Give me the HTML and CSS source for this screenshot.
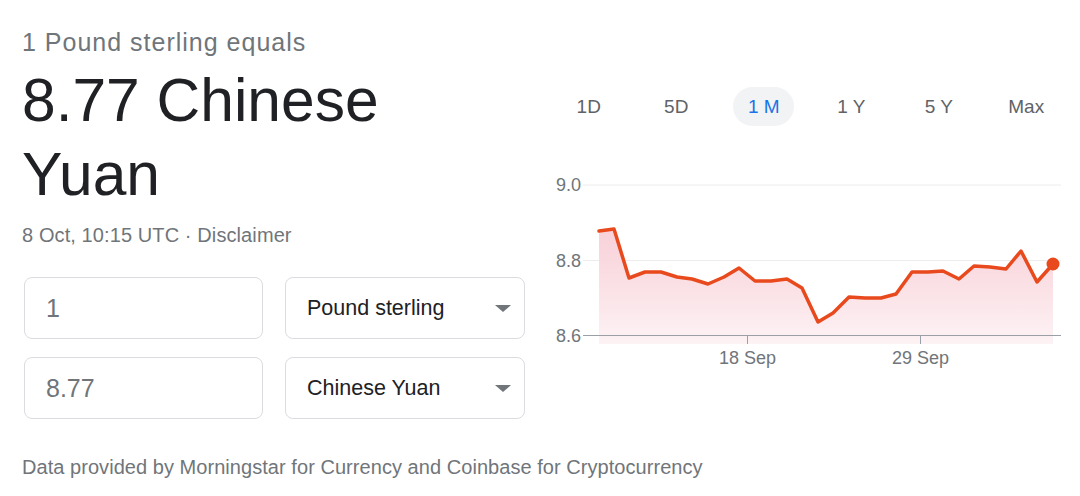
FILE: index.html
```html
<!DOCTYPE html>
<html lang="en">
<head>
<meta charset="utf-8">
<title>Currency converter</title>
<link rel="stylesheet" href="styles.css">
</head>
<body>
<div class="card">
  <div class="main">
    <div class="left">
      <div class="label">1 Pound sterling equals</div>
      <div class="value">8.77 Chinese<br>Yuan</div>
      <div class="meta">8 Oct, 10:15 UTC · Disclaimer</div>
      <div class="converter">
        <div class="field amount">1</div>
        <div class="field select"><span>Pound sterling</span><span class="caret"></span></div>
        <div class="field amount">8.77</div>
        <div class="field select"><span>Chinese Yuan</span><span class="caret"></span></div>
      </div>
    </div>
    <div class="right">
      <div class="tabs">
        <div class="tab"><span>1D</span></div>
        <div class="tab"><span>5D</span></div>
        <div class="tab"><span class="active">1 M</span></div>
        <div class="tab"><span>1 Y</span></div>
        <div class="tab"><span>5 Y</span></div>
        <div class="tab"><span>Max</span></div>
      </div>
      <svg class="chart" width="525" height="220" viewBox="545 160 525 220" xmlns="http://www.w3.org/2000/svg">
        <defs>
          <linearGradient id="fillGrad" gradientUnits="userSpaceOnUse" x1="0" y1="229" x2="0" y2="344">
            <stop offset="0" stop-color="#f8d0d8"/>
            <stop offset="1" stop-color="#fdf2f4"/>
          </linearGradient>
        </defs>
        <line x1="583" y1="185" x2="1061" y2="185" class="grid"/>
        <line x1="583" y1="260.5" x2="1061" y2="260.5" class="grid"/>
        <polygon fill="url(#fillGrad)" points="599,231 614,229 629,278 645,272 661,272 677,277 692,279 708,284 724,277 739,268 755,281 771,281 787,279 802,288 818,322 833,313 849,297 865,298 881,298 896,294 912,272 928,272 943,271 959,279 974,266 990,267 1006,269 1021,251 1037,282 1053,264 1053,344 599,344"/>
        <line x1="583" y1="335.5" x2="1061" y2="335.5" class="axis"/>
        <line x1="747.5" y1="336" x2="747.5" y2="344" class="axis"/>
        <line x1="920.5" y1="336" x2="920.5" y2="344" class="axis"/>
        <polyline class="series" points="599,231 614,229 629,278 645,272 661,272 677,277 692,279 708,284 724,277 739,268 755,281 771,281 787,279 802,288 818,322 833,313 849,297 865,298 881,298 896,294 912,272 928,272 943,271 959,279 974,266 990,267 1006,269 1021,251 1037,282 1053,264"/>
        <circle cx="1053" cy="264" r="6.5" class="dot"/>
        <text x="581" y="191" class="ylab">9.0</text>
        <text x="581" y="266.5" class="ylab">8.8</text>
        <text x="581" y="342" class="ylab">8.6</text>
        <text x="747.5" y="364" class="xlab">18 Sep</text>
        <text x="920.5" y="364" class="xlab">29 Sep</text>
      </svg>
    </div>
  </div>
  <div class="footer">Data provided by Morningstar for Currency and Coinbase for Cryptocurrency</div>
</div>
</body>
</html>
```

FILE: styles.css
```css
html, body {
  margin: 0;
  padding: 0;
  background: #ffffff;
}

body {
  font-family: "Liberation Sans", Arial, Helvetica, sans-serif;
  color: #202124;
  width: 1080px;
  height: 496px;
  overflow: hidden;
}

.card {
  padding: 27px 0 0 22px;
}

.main {
  display: flex;
  align-items: flex-start;
}

.left {
  width: 505px;
  display: flex;
  flex-direction: column;
}

.label {
  font-size: 25px;
  line-height: 30px;
  letter-spacing: 1px;
  color: #70757a;
  white-space: nowrap;
}

.value {
  margin-top: 6px;
  font-size: 60.5px;
  line-height: 74px;
  color: #202124;
}

.meta {
  margin-top: 12px;
  font-size: 20px;
  line-height: 24px;
  letter-spacing: 0.1px;
  color: #70757a;
}

.converter {
  margin: 30px 0 0 2px;
  display: grid;
  grid-template-columns: 239px 240px;
  grid-auto-rows: 62px;
  column-gap: 22px;
  row-gap: 18px;
}

.field {
  box-sizing: border-box;
  border: 1px solid #dadce0;
  border-radius: 8px;
  display: flex;
  align-items: center;
  padding-left: 21px;
}

.amount {
  font-size: 25px;
  color: #70757a;
}

.select {
  justify-content: space-between;
  padding-right: 13px;
  font-size: 21.5px;
  color: #202124;
}

.caret {
  width: 0;
  height: 0;
  border-left: 8px solid transparent;
  border-right: 8px solid transparent;
  border-top: 7px solid #70757a;
}

.right {
  margin-left: 18px;
  width: 525px;
  display: flex;
  flex-direction: column;
}

.tabs {
  margin-top: 60px;
  display: grid;
  grid-template-columns: repeat(6, 1fr);
  height: 39px;
}

.tab {
  display: flex;
  justify-content: center;
  align-items: center;
  font-size: 19px;
  color: #5f6368;
}

.tab span {
  display: flex;
  align-items: center;
  justify-content: center;
  height: 39px;
}

.tab .active {
  width: 61px;
  border-radius: 20px;
  background: #f1f3f4;
  color: #1a73e8;
}

.chart {
  display: block;
  margin-top: 34px;
  overflow: visible;
}

.grid {
  stroke: #ececec;
  stroke-width: 1;
}

.axis {
  stroke: #9aa0a6;
  stroke-width: 1;
}

.series {
  fill: none;
  stroke: #e84a1d;
  stroke-width: 3.5;
  stroke-linejoin: round;
  stroke-linecap: round;
}

.dot {
  fill: #e84a1d;
}

.ylab {
  font-family: "Liberation Sans", Arial, sans-serif;
  font-size: 18px;
  fill: #70757a;
  text-anchor: end;
}

.xlab {
  font-family: "Liberation Sans", Arial, sans-serif;
  font-size: 18px;
  fill: #70757a;
  text-anchor: middle;
}

.footer {
  margin-top: 36px;
  font-size: 20px;
  line-height: 24px;
  letter-spacing: 0.05px;
  color: #70757a;
  white-space: nowrap;
}
```
